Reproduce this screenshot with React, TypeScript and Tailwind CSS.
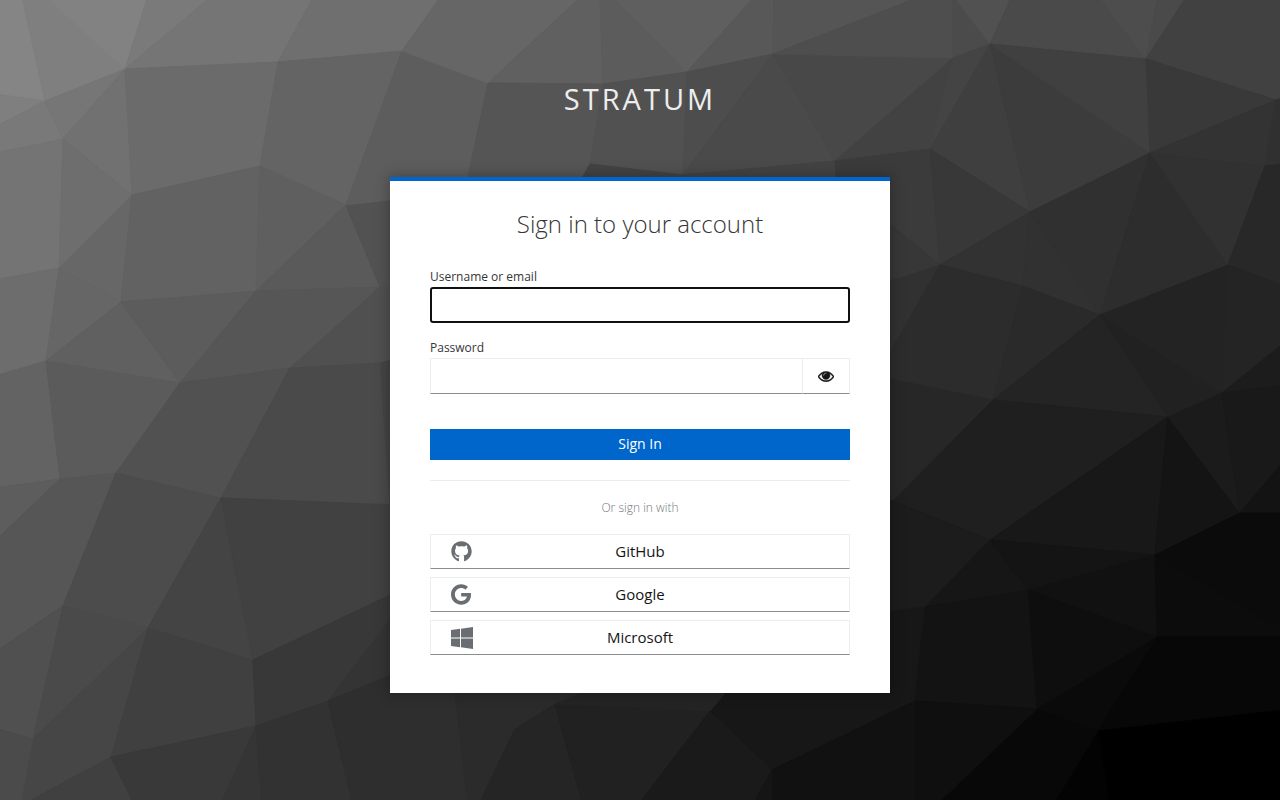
import { FaGithub, FaGoogle } from "react-icons/fa";

/* Facets of the low-poly backdrop: fill colour and corner points. */
const facets: [string, string][] = [
  ["#858585", "-5,-5 22,-5 45,100 -5,93"],
  ["#7f7f7f", "22,-5 48,-5 125,68 45,100"],
  ["#828282", "45,-5 148,-5 125,68"],
  ["#7a7a7a", "148,-5 212,-5 125,68"],
  ["#757575", "212,-5 314,-5 278,61 125,68"],
  ["#6f6f6f", "314,-5 441,-5 402,50 278,61"],
  ["#7f7f7f", "-5,93 45,100 -5,126"],
  ["#797979", "-5,126 45,100 63,138 -5,152"],
  ["#767676", "45,100 125,68 63,138"],
  ["#717171", "125,68 132,194 63,138"],
  ["#747474", "-5,152 63,138 59,267 -5,279"],
  ["#6e6e6e", "63,138 132,194 59,267"],
  ["#6b6b6b", "125,68 278,61 260,165 132,194"],
  ["#646464", "278,61 402,50 346,204 260,165"],
  ["#676767", "132,194 121,301 59,267"],
  ["#626262", "132,194 260,165 256,290 121,301"],
  ["#5f5f5f", "260,165 346,204 256,290"],
  ["#5a5a5a", "346,204 380,286 256,290"],
  ["#525252", "346,204 480,172 480,290 380,286"],
  ["#5d5d5d", "402,50 488,82 465,190 346,204"],
  ["#666666", "441,-5 582,-5 488,82 402,50"],
  ["#606060", "582,-5 600,-5 603,83 488,82"],
  ["#5c5c5c", "600,-5 612,-5 687,71 603,83"],
  ["#5f5f5f", "612,-5 755,-5 687,71"],
  ["#585858", "755,-5 774,-5 773,53 687,71"],
  ["#555555", "774,-5 922,-5 773,53"],
  ["#555555", "488,82 603,83 590,163 575,190 465,190"],
  ["#515151", "603,83 687,71 683,174 590,163"],
  ["#4d4d4d", "687,71 773,53 683,174"],
  ["#4a4a4a", "773,53 835,160 683,174"],
  ["#484848", "773,53 953,57 835,160"],
  ["#4e4e4e", "922,-5 953,-5 953,57 773,53"],
  ["#434343", "590,163 683,174 835,160 837,190 575,190"],
  ["#4b4b4b", "953,-5 990,43 953,57"],
  ["#515151", "953,-5 1012,-5 990,43"],
  ["#4a4a4a", "1012,-5 1098,-5 1146,58 990,43"],
  ["#4d4d4d", "1098,-5 1158,-5 1146,58"],
  ["#4a4a4a", "1158,-5 1187,-5 1146,58"],
  ["#414141", "1187,-5 1285,-5 1285,96 1276,99 1146,58"],
  ["#424242", "953,57 930,148 835,160"],
  ["#444444", "953,57 990,43 930,148"],
  ["#3f3f3f", "990,43 1030,211 930,148"],
  ["#3c3c3c", "990,43 1150,152 1030,211"],
  ["#404040", "990,43 1146,58 1150,152"],
  ["#393939", "1146,58 1276,99 1150,152"],
  ["#333333", "1276,99 1265,165 1150,152"],
  ["#303030", "1276,99 1285,96 1285,163 1265,165"],
  ["#3b3b3b", "835,160 930,148 940,264 837,180"],
  ["#373737", "837,180 940,264 860,290"],
  ["#383838", "930,148 1030,211 940,264"],
  ["#323232", "1030,211 1023,285 940,264"],
  ["#313131", "1030,211 1100,314 1023,285"],
  ["#303030", "1030,211 1150,152 1117,270 1100,314"],
  ["#2d2d2d", "1150,152 1228,264 1100,314"],
  ["#313131", "1150,152 1265,165 1228,264"],
  ["#282828", "1265,165 1285,163 1285,285 1228,264"],
  ["#313131", "860,290 940,264 888,355 860,360"],
  ["#2c2c2c", "940,264 1023,285 993,399 860,372 888,355"],
  ["#2a2a2a", "1023,285 1100,314 993,399"],
  ["#242424", "1100,314 1168,416 993,399"],
  ["#212121", "1100,314 1222,392 1168,416"],
  ["#232323", "1100,314 1228,264 1222,392"],
  ["#242424", "1228,264 1285,285 1285,341 1222,392"],
  ["#1c1c1c", "1222,392 1285,341 1285,384"],
  ["#272727", "860,372 993,399 893,500 860,510"],
  ["#1f1f1f", "993,399 1168,416 990,539 893,500"],
  ["#181818", "1168,416 1155,554 990,539"],
  ["#141414", "1168,416 1240,512 1155,554"],
  ["#1b1b1b", "1222,392 1240,512 1168,416"],
  ["#191919", "1222,392 1285,384 1285,459 1240,512"],
  ["#131313", "1240,512 1285,459 1285,512"],
  ["#0b0b0b", "1240,512 1285,512 1285,630 1155,554"],
  ["#1c1c1c", "860,490 893,500 990,539 925,606 860,614"],
  ["#161616", "990,539 1028,589 925,606"],
  ["#141414", "990,539 1155,554 1028,589"],
  ["#111111", "1155,554 1157,636 1028,589"],
  ["#0c0c0c", "1155,554 1285,630 1285,636 1157,636"],
  ["#171717", "860,614 925,606 915,700 772,769 710,710 735,680"],
  ["#131313", "925,606 1028,589 1037,708 915,700"],
  ["#0e0e0e", "1028,589 1157,636 1037,708"],
  ["#0a0a0a", "1157,636 1098,730 1037,708"],
  ["#070707", "1157,636 1285,636 1285,709 1098,730"],
  ["#000000", "1098,730 1285,709 1285,805 1100,805"],
  ["#030303", "1098,730 1110,805 1052,805"],
  ["#080808", "1037,708 1098,730 1052,805 935,805"],
  ["#0f0f0f", "915,700 1037,708 935,805 915,805"],
  ["#111111", "915,700 915,805 772,805 772,769"],
  ["#6d6d6d", "-5,279 59,267 46,360 -5,375"],
  ["#666666", "59,267 121,301 46,360"],
  ["#606060", "121,301 180,382 46,360"],
  ["#5c5c5c", "121,301 256,290 180,382"],
  ["#565656", "256,290 380,286 290,367 180,382"],
  ["#505050", "380,286 420,286 420,350 380,362 290,367"],
  ["#636363", "-5,375 46,360 60,478 -5,487"],
  ["#5b5b5b", "46,360 180,382 116,472 60,478"],
  ["#515151", "180,382 290,367 221,497 116,472"],
  ["#4a4a4a", "290,367 380,362 420,505 221,497"],
  ["#454545", "380,362 430,350 430,505 390,504"],
  ["#5d5d5d", "-5,487 60,478 -5,540"],
  ["#565656", "60,478 116,472 63,605 -5,651 -5,540"],
  ["#4c4c4c", "116,472 221,497 148,627 63,605"],
  ["#444444", "221,497 253,659 148,627"],
  ["#414141", "221,497 420,505 420,580 253,659"],
  ["#505050", "-5,651 63,605 33,738 -5,727"],
  ["#4a4a4a", "63,605 148,627 33,738"],
  ["#464646", "148,627 111,756 33,798 20,805 33,738"],
  ["#404040", "148,627 253,659 256,725 111,756"],
  ["#383838", "253,659 420,580 328,700 256,725"],
  ["#343434", "420,580 420,662 328,700"],
  ["#4b4b4b", "-5,727 33,738 20,805 -5,805"],
  ["#404040", "111,756 135,805 20,805"],
  ["#393939", "111,756 256,725 220,805 135,805"],
  ["#353535", "256,725 262,805 220,805"],
  ["#323232", "256,725 328,700 353,805 262,805"],
  ["#2e2e2e", "328,700 420,662 454,680 468,805 353,805"],
  ["#2b2b2b", "454,680 590,680 555,703 515,728 478,805 468,805"],
  ["#252525", "555,703 583,805 478,805 515,728"],
  ["#212121", "555,703 710,710 637,805 583,805"],
  ["#242424", "555,703 610,680 735,680 710,710"],
  ["#1a1a1a", "710,710 772,769 752,805 637,805"],
  ["#151515", "772,769 772,805 752,805"],
];

function Backdrop() {
  return (
    <svg
      aria-hidden="true"
      className="absolute inset-0 -z-10 h-full w-full bg-[#2b2b2b]"
      viewBox="0 -1 1280 800"
      preserveAspectRatio="xMidYMid slice"
    >
      {facets.map(([fill, points]) => (
        <polygon key={points} points={points} fill={fill} stroke={fill} strokeWidth="1" />
      ))}
    </svg>
  );
}

function EyeIcon() {
  return (
    <svg
      viewBox="0 0 1792 1792"
      fill="currentColor"
      stroke="currentColor"
      strokeWidth="50"
      className="size-4"
      aria-hidden="true"
    >
      <path d="M1664 960q-152-236-381-353 61 104 61 225 0 185-131.5 316.5t-316.5 131.5-316.5-131.5-131.5-316.5q0-121 61-225-229 117-381 353 133 205 333.5 326.5t434.5 121.5 434.5-121.5 333.5-326.5zm-720-384q0-20-14-34t-34-14q-125 0-214.5 89.5t-89.5 214.5q0 20 14 34t34 14 34-14 14-34q0-86 61-147t147-61q20 0 34-14t14-34zm848 384q0 34-20 69-140 230-376.5 368.5t-499.5 138.5-499.5-139-376.5-368q-20-35-20-69t20-69q140-229 376.5-368t499.5-139 499.5 139 376.5 368q20 35 20 69z" />
    </svg>
  );
}

function WindowsIcon() {
  return (
    <svg viewBox="0 32 448 448" fill="currentColor" className="size-[22px]" aria-hidden="true">
      <path d="M0 93.7l183.6-25.3v177.4H0V93.7zm0 324.6l183.6 25.3V268.4H0v149.9zm203.8 28L448 480V268.4H203.8v177.9zm0-380.6v180.1H448V32L203.8 65.7z" />
    </svg>
  );
}

const providers = [
  { name: "GitHub", icon: <FaGithub className="size-[21px]" /> },
  { name: "Google", icon: <FaGoogle className="h-[21px] w-5" /> },
  { name: "Microsoft", icon: <WindowsIcon /> },
];

export default function App() {
  return (
    <div className="relative isolate flex min-h-screen flex-col items-center overflow-hidden px-4 pb-12 font-['Open_Sans',sans-serif] text-[#363636]">
      <Backdrop />
      <header className="pt-[78px] pb-[57px]">
        <div className="text-[29px] leading-[42px] tracking-[3px] text-[#ededed] uppercase">
          Stratum
        </div>
      </header>
      <main className="w-full max-w-[500px] border-t-4 border-[#0066cc] bg-white px-10 pb-[38px] shadow-[0_0_12px_2px_rgba(3,3,3,0.25)]">
        <h1 className="pt-[27px] pb-7 text-center text-2xl font-light">Sign in to your account</h1>
        <form onSubmit={(e) => e.preventDefault()}>
          <div className="flex flex-col">
            <label htmlFor="username" className="pb-px text-xs leading-[18px]">
              Username or email
            </label>
            <input
              id="username"
              type="text"
              className="h-9 rounded-[3px] border-2 border-[#101010] bg-white px-2 text-base outline-none"
            />
          </div>
          <div className="mt-4 flex flex-col">
            <label htmlFor="password" className="pb-px text-xs leading-[18px]">
              Password
            </label>
            <div className="flex">
              <input
                id="password"
                type="password"
                className="h-9 min-w-0 flex-1 border border-r-0 border-[#ededed] border-b-[#8a8d90] bg-white px-2 text-base text-[#151515]"
              />
              <button
                type="button"
                aria-label="Show password"
                className="flex h-9 w-12 items-center justify-center border border-[#ededed] border-b-[#8a8d90] bg-white text-[#151515]"
              >
                <EyeIcon />
              </button>
            </div>
          </div>
          <button
            type="submit"
            className="mt-[35px] h-[31px] w-full bg-[#0066cc] pb-[2px] text-sm text-white"
          >
            Sign In
          </button>
        </form>
        <section className="mt-5 border-t border-[#ededed] pt-[18px]">
          <h2 className="text-center text-xs leading-[18px] font-light text-[#72767b]">
            Or sign in with
          </h2>
          <ul className="mt-[17px] flex flex-col gap-2">
            {providers.map(({ name, icon }) => (
              <li key={name}>
                <a
                  href="#"
                  className="relative flex h-[34px] items-center justify-center border border-[#ededed] border-b-[#8a8d90] bg-white text-[15px] text-[#151515] sm:h-[35px]"
                >
                  <span className="absolute left-5 text-[#6a6e73]">{icon}</span>
                  {name}
                </a>
              </li>
            ))}
          </ul>
        </section>
      </main>
    </div>
  );
}
